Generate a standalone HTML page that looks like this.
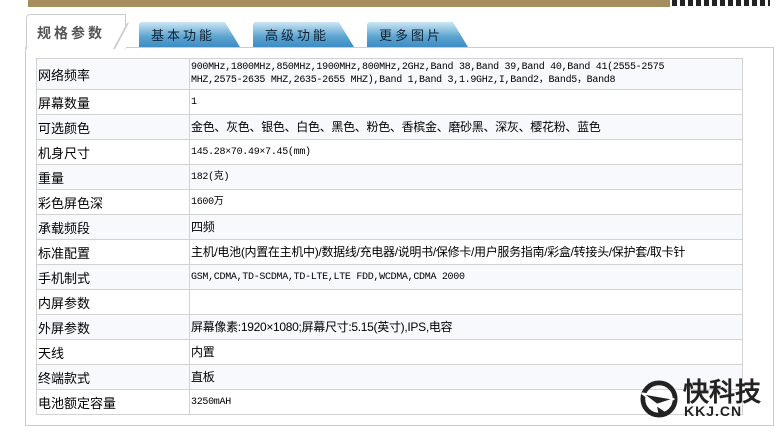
<!DOCTYPE html>
<html><head><meta charset="utf-8"><style>
body{margin:0;width:778px;height:432px;background:#fff;position:relative;overflow:hidden;font-family:"Liberation Sans","WenQuanYi Zen Hei","Noto Sans CJK SC",sans-serif;}
.ban{position:absolute;left:28px;top:0;width:642px;height:7px;background:#a58d5e;}
.qr{position:absolute;left:672px;top:0;width:98px;height:6px;background:repeating-linear-gradient(90deg,#222 0 5px,#fff 5px 8px);}
.box{position:absolute;left:25px;top:47px;width:747px;height:377px;border:1px solid #ccc;}
.tab0{position:absolute;left:26px;top:14px;width:98px;height:34px;background:#fff;border:1px solid #ccc;border-bottom:none;border-radius:4px 0 0 0;font-size:14px;color:#555;letter-spacing:3px;line-height:36px;text-indent:10px;font-weight:bold;}
.tab0:after{content:"";position:absolute;right:-7px;top:8px;width:10px;height:26px;border-left:2px solid #ccc;transform:skewX(-28deg);background:#fff}
.tab{position:absolute;top:22px;width:101px;height:25px;background:linear-gradient(#cde6f3,#5aa3d0 60%,#3d8cc4);color:#123;font-size:13px;letter-spacing:3px;line-height:28px;text-indent:12px;clip-path:polygon(0 0,85% 0,100% 100%,0 100%);border-radius:3px 0 0 0;}
table{position:absolute;left:36px;top:58px;width:707px;border-collapse:collapse;font-size:12px;font-family:"Liberation Mono","WenQuanYi Zen Hei",monospace;table-layout:fixed}
tr{height:25px}
td{border:1px solid #d2d2d2;padding:0 0 0 1px;color:#000;line-height:13px;vertical-align:middle;white-space:nowrap;overflow:hidden}
td:first-child{width:151px;font-family:"WenQuanYi Zen Hei","Noto Sans CJK SC",sans-serif;font-size:13px}
tr:nth-child(odd){background:#f7f9fd}
.sm{font-size:10px;letter-spacing:-0.3px}
.cj{font-size:12px;font-family:"WenQuanYi Zen Hei",sans-serif;letter-spacing:-0.3px}
.logo{position:absolute;left:640px;top:380px;}
</style></head><body>
<div class="ban"></div><div class="qr"></div>
<div class="box"></div>
<div class="tab0">规格参数</div>
<div class="tab" style="left:139px">基本功能</div>
<div class="tab" style="left:253px">高级功能</div>
<div class="tab" style="left:367px">更多图片</div>
<table>
<tr style="height:31px"><td>网络频率</td><td class="sm">900MHz,1800MHz,850MHz,1900MHz,800MHz,2GHz,Band 38,Band 39,Band 40,Band 41(2555-2575<br>MHZ,2575-2635 MHZ,2635-2655 MHZ),Band 1,Band 3,1.9GHz,I,Band2，Band5，Band8</td></tr>
<tr><td>屏幕数量</td><td class="sm">1</td></tr>
<tr><td>可选颜色</td><td class="cj">金色、灰色、银色、白色、黑色、粉色、香槟金、磨砂黑、深灰、樱花粉、蓝色</td></tr>
<tr><td>机身尺寸</td><td class="sm">145.28×70.49×7.45(mm)</td></tr>
<tr><td>重量</td><td class="sm">182(克)</td></tr>
<tr><td>彩色屏色深</td><td class="sm">1600万</td></tr>
<tr><td>承载频段</td><td class="cj">四频</td></tr>
<tr><td>标准配置</td><td class="cj">主机/电池(内置在主机中)/数据线/充电器/说明书/保修卡/用户服务指南/彩盒/转接头/保护套/取卡针</td></tr>
<tr><td>手机制式</td><td class="sm">GSM,CDMA,TD-SCDMA,TD-LTE,LTE FDD,WCDMA,CDMA 2000</td></tr>
<tr><td>内屏参数</td><td></td></tr>
<tr><td>外屏参数</td><td class="cj">屏幕像素:1920×1080;屏幕尺寸:5.15(英寸),IPS,电容</td></tr>
<tr><td>天线</td><td class="cj">内置</td></tr>
<tr><td>终端款式</td><td class="cj">直板</td></tr>
<tr><td>电池额定容量</td><td class="sm">3250mAH</td></tr>
</table>
<div class="logo">
<svg width="38" height="38" viewBox="0 0 40 40"><circle cx="20" cy="20" r="17" fill="none" stroke="#222" stroke-width="5"/><path d="M2 14 L36 20 L18 26 Z" fill="#222" stroke="#fff" stroke-width="2"/><path d="M18 28 L30 36 L20 38 Z" fill="#222"/></svg>
<div style="position:absolute;left:43px;top:-2px;font-size:26px;line-height:28px;font-weight:bold;color:#222;white-space:nowrap;font-family:'WenQuanYi Zen Hei',sans-serif">快科技</div>
<div style="position:absolute;left:44px;top:24px;font-size:14px;line-height:14px;font-weight:bold;color:#222;white-space:nowrap;letter-spacing:1px">KKJ.CN</div>
</div>
</body></html>
